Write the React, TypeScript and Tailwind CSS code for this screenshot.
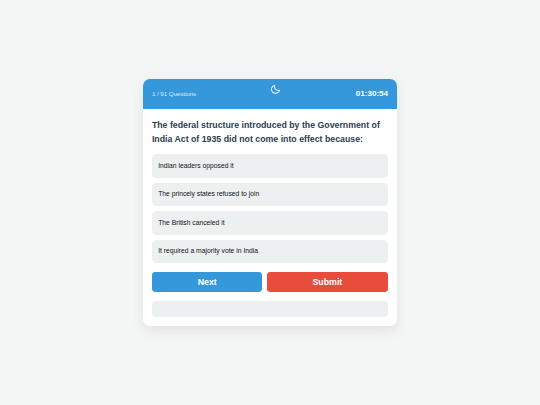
import { BiMoon } from "react-icons/bi";

const options = [
  "Indian leaders opposed it",
  "The princely states refused to join",
  "The British canceled it",
  "It required a majority vote in India",
];

export default function App() {
  return (
    <div className="flex h-screen items-center justify-center bg-[#f4f6f6] font-['Liberation_Sans',Arial,sans-serif]">
      <div className="w-[253.1px] overflow-hidden rounded-[7px] bg-white shadow-[0_4.2px_12.6px_rgba(0,0,0,0.08)]">
        <header className="flex h-[29.9px] items-center justify-between bg-[#3498db] px-[8.44px] text-white">
          <span className="text-[6.07px] opacity-80">1 / 91 Questions</span>
          <button className="mb-[9px]" aria-label="Toggle theme">
            <BiMoon className="size-[10.8px]" />
          </button>
          <span className="text-[8.1px] font-bold">01:30:54</span>
        </header>
        <main className="p-[8.44px]">
          <h1 className="mb-[8.04px] pt-[0.4px] text-[8.775px] leading-[14.05px] font-bold text-[#2c3e50]">
            The federal structure introduced by the Government of India Act of 1935 did not come into effect because:
          </h1>
          <ul className="space-y-[5.06px]">
            {options.map((option) => (
              <li
                key={option}
                className="flex h-[23.5px] items-center rounded-[4.2px] bg-[#ecf0f1] px-[6.33px] text-[6.75px] text-[#111]"
              >
                {option}
              </li>
            ))}
          </ul>
          <div className="mt-[8.44px] flex gap-[4.2px] text-[8.8px] font-bold text-white">
            <button className="h-[20.5px] w-[110.6px] rounded-[3.4px] bg-[#3498db] pt-px">Next</button>
            <button className="h-[20.5px] flex-1 rounded-[3.4px] bg-[#e74c3c] pt-px">Submit</button>
          </div>
          <div className="mt-[8.44px] h-[16.9px] rounded-[3.4px] bg-[#ecf0f1]" />
        </main>
      </div>
    </div>
  );
}
